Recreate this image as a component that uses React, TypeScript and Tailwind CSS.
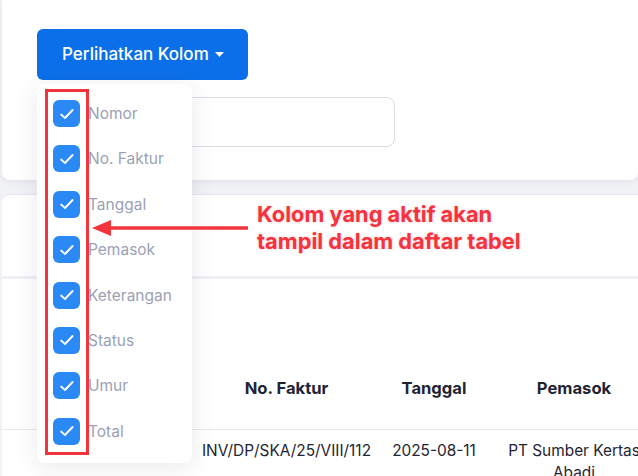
import React from "react";

const columns = ["Nomor", "No. Faktur", "Tanggal", "Pemasok", "Keterangan", "Status", "Umur", "Total"];

function CheckBox() {
  return (
    <span className="flex h-[27px] w-[27px] shrink-0 items-center justify-center rounded-[6px] bg-[#2b89f6]">
      <svg width="16" height="16" viewBox="0 0 16 16" fill="none">
        <path d="M2.2 8.6 L6 12 L13.6 4" stroke="white" strokeWidth="1.9" strokeLinecap="round" strokeLinejoin="round" />
      </svg>
    </span>
  );
}

export default function App() {
  return (
    <div
      className="relative h-[476px] w-[638px] overflow-hidden bg-[#f1f2f5]"
      style={{ fontFamily: "Inter, 'Noto Sans', sans-serif" }}
    >
      {/* filter card */}
      <div className="ml-[2px] h-[180px] rounded-b-lg bg-white pl-[35px] pt-[29px] shadow-[0_2px_6px_rgba(0,0,0,0.06)]">
        <button className="flex h-[51px] w-[211px] items-center gap-[6px] rounded-md bg-[#0b6fe9] pl-[25px] text-[17px] font-medium text-white">
          Perlihatkan Kolom
          <svg width="9" height="5" viewBox="0 0 9 5">
            <path d="M0 0 L9 0 L4.5 5 Z" fill="white" />
          </svg>
        </button>
        <div className="mt-[17px] h-[50px] w-[358px] rounded-lg border border-[#dcdde7] bg-white" />
      </div>

      {/* list card */}
      <div className="ml-[2px] mt-[14px] rounded-tl-lg border-t border-[#e6e7ec] bg-white">
        <div className="h-[84px] border-b-[3px] border-[#eef0f3]" />
        <div className="overflow-hidden pt-[70px]">
          <table className="w-[660px] table-fixed border-collapse text-[15.4px] text-[#1f2433]">
            <colgroup>
              <col className="w-[189px]" />
              <col className="w-[191px]" />
              <col className="w-[104px]" />
              <col className="w-[176px]" />
            </colgroup>
            <thead>
              <tr className="h-[80px] text-[16.6px]">
                <th className="px-[10px]" />
                <th className="px-[10px] text-center font-bold">No. Faktur</th>
                <th className="px-[10px] text-center font-bold">Tanggal</th>
                <th className="px-[10px] text-center font-bold">Pemasok</th>
              </tr>
            </thead>
            <tbody>
              <tr className="border-t border-[#e8e9ee] align-top leading-[22px]">
                <td className="px-[10px] pt-[10px]" />
                <td className="whitespace-nowrap px-[10px] pt-[10px] text-center">INV/DP/SKA/25/VIII/112</td>
                <td className="whitespace-nowrap px-[10px] pt-[10px] text-center">2025-08-11</td>
                <td className="px-[10px] pt-[10px] text-center">PT Sumber Kertas Abadi</td>
              </tr>
            </tbody>
          </table>
        </div>
      </div>

      {/* dropdown menu */}
      <div className="absolute left-[37px] top-[84px] h-[379px] w-[155px] rounded-lg bg-white pt-[16px] shadow-[0_4px_24px_rgba(30,40,70,0.10)]">
        {columns.map((c) => (
          <div key={c} className="flex h-[45.4px] items-start gap-[8px] pl-[16px]">
            <CheckBox />
            <span className="text-[15.5px] leading-[27px] text-[#9ba1b5]">{c}</span>
          </div>
        ))}
      </div>

      {/* annotation */}
      <div className="absolute left-[45px] top-[89px] h-[366px] w-[44px] border-[3px] border-[#f2343c]" />
      <svg className="absolute left-[90px] top-[218px]" width="160" height="20" viewBox="0 0 160 20">
        <path d="M18 10 L158 10" stroke="#f2343c" strokeWidth="3.5" />
        <path d="M2 10 L21 2 L21 18 Z" fill="#f2343c" />
      </svg>
      <div className="absolute left-[257px] top-[201px] text-[21.8px] font-bold leading-[27px] text-[#f5333e] [text-shadow:0_0_3px_rgba(245,51,62,0.25)]">
        Kolom yang aktif akan
        <br />
        tampil dalam daftar tabel
      </div>
    </div>
  );
}
